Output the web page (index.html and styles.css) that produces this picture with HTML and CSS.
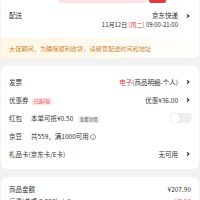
FILE: index.html
```html
<!DOCTYPE html>
<html>
<head>
<meta charset="utf-8">
<link rel="stylesheet" href="styles.css">
</head>
<body>
<div class="page">
  <div class="card top">
    <div class="btns"><span class="btn-light"></span><span class="btn-red"></span></div>
    <div class="row ship">
      <span class="label">配送</span>
      <div class="ship-right">
        <div class="line1"><span>京东快递</span><svg class="arr" viewBox="0 0 6 6"><path d="M2.2 1.8 L3.6 3 L2.2 4.2" fill="none" stroke="#333" stroke-width="0.9"/></svg></div>
        <div class="line2">11月12日 <span class="red">[周二]</span> 09:00-21:00</div>
      </div>
    </div>
    <div class="banner">大促期间，为确保顺利收货，请留意配送时间和地址</div>
  </div>
  <div class="card mid">
    <div class="row item">
      <span class="label">发票</span>
      <span class="val"><span class="red">电子</span>(商品明细-个人)<svg class="arr" viewBox="0 0 6 6"><path d="M2.2 1.8 L3.6 3 L2.2 4.2" fill="none" stroke="#333" stroke-width="0.9"/></svg></span>
    </div>
    <div class="row item">
      <span class="label">优惠券 <span class="tag-red">已选2张</span></span>
      <span class="val">优惠¥36.00<svg class="arr" viewBox="0 0 6 6"><path d="M2.2 1.8 L3.6 3 L2.2 4.2" fill="none" stroke="#333" stroke-width="0.9"/></svg></span>
    </div>
    <div class="row item">
      <span class="label"><span class="lw">红包</span>本单可抵¥0.50 <span class="tag-grey">查看详情</span></span>
      <span class="toggle"><span class="knob"></span></span>
    </div>
    <div class="row item">
      <span class="label"><span class="lw">京豆</span>共559，满1000可用 <span class="info">i</span></span>
    </div>
    <div class="row item">
      <span class="label">礼品卡(京东卡/E卡)</span>
      <span class="val">无可用<svg class="arr" viewBox="0 0 6 6"><path d="M2.2 1.8 L3.6 3 L2.2 4.2" fill="none" stroke="#333" stroke-width="0.9"/></svg></span>
    </div>
  </div>
  <div class="card bottom">
    <div class="row sum">
      <span class="label">商品金额</span>
      <span class="amt">¥207.90</span>
    </div>
    <div class="row sum">
      <span class="label">运费(总重:3.990kg) <span class="info">i</span></span>
      <span class="amt red">+ ¥6.00</span>
    </div>
  </div>
</div>
</body>
</html>
```
FILE: styles.css
```css
* { box-sizing: border-box; }
html, body { margin: 0; padding: 0; }
body {
  background: #f2f2f2;
  font-family: "Noto Sans CJK SC", "Liberation Sans", sans-serif;
  color: #333;
  font-size: 6.5px;
  width: 200px;
  height: 200px;
  overflow: hidden;
}
.page { display: flex; flex-direction: column; gap: 8px; }
.card { background: #fff; border-radius: 0 0 6px 6px; margin: 0 1px; }
.mid, .bottom { border-radius: 6px; }
.btns { height: 3px; display: flex; gap: 3px; padding-left: 58px; }
.btn-light { width: 87px; height: 3px; background: #fbe3e3; border-radius: 0 0 2px 2px; }
.btn-red { width: 17px; height: 3px; background: #e4393c; border-radius: 0 0 2px 2px; }
.row { display: flex; justify-content: space-between; align-items: center; padding: 0 7px 0 8px; }
.ship { align-items: flex-start; padding-top: 8px; height: 34px; }
.ship .label { line-height: 9px; }
.ship-right { display: flex; flex-direction: column; align-items: flex-end; }
.line1 { display: flex; align-items: center; line-height: 9px; }
.line2 { font-size: 6px; line-height: 8px; margin-top: 1px; margin-right: 14px; }
.arr { width: 8px; height: 8px; margin-left: 6px; }
.red { color: #e4393c; }
.banner {
  height: 20px;
  margin-top: 1px;
  display: flex;
  align-items: center;
  padding-left: 8px;
  color: #c98a3f;
  font-size: 6.2px;
  background: linear-gradient(90deg, #fff6e3 0%, #fffaf0 60%, #ffffff 100%);
  border-radius: 0 0 6px 6px;
}
.mid { padding-top: 7px; padding-bottom: 6px; }
.item { height: 18px; }
.val { display: flex; align-items: center; }
.lw { display: inline-block; width: 22px; }
.tag-red {
  display: inline-block;
  font-size: 4.5px;
  color: #e4393c;
  background: #fde6e6;
  padding: 0 2px;
  line-height: 7px;
  border-radius: 1px;
  margin-left: 2px;
  vertical-align: middle;
}
.tag-grey {
  display: inline-block;
  font-size: 4.5px;
  color: #555;
  background: #f0f0f0;
  padding: 0 2px;
  line-height: 7px;
  border-radius: 1px;
  margin-left: 3px;
  vertical-align: middle;
}
.info {
  display: inline-block;
  width: 6px; height: 6px;
  border: 0.6px solid #999;
  border-radius: 50%;
  font-size: 4px;
  line-height: 5px;
  text-align: center;
  color: #999;
  vertical-align: middle;
  font-family: "Liberation Serif", serif;
}
.toggle {
  width: 22px; height: 10px;
  background: #efefef;
  border-radius: 5px;
  display: flex; align-items: center;
}
.knob { width: 10px; height: 10px; border-radius: 50%; background: #fff; box-shadow: 0 0 1.5px rgba(0,0,0,0.2); }
.bottom { padding-top: 6px; }
.sum { height: 12px; }
.amt { font-size: 6.5px; margin-right: 1px; }
```
